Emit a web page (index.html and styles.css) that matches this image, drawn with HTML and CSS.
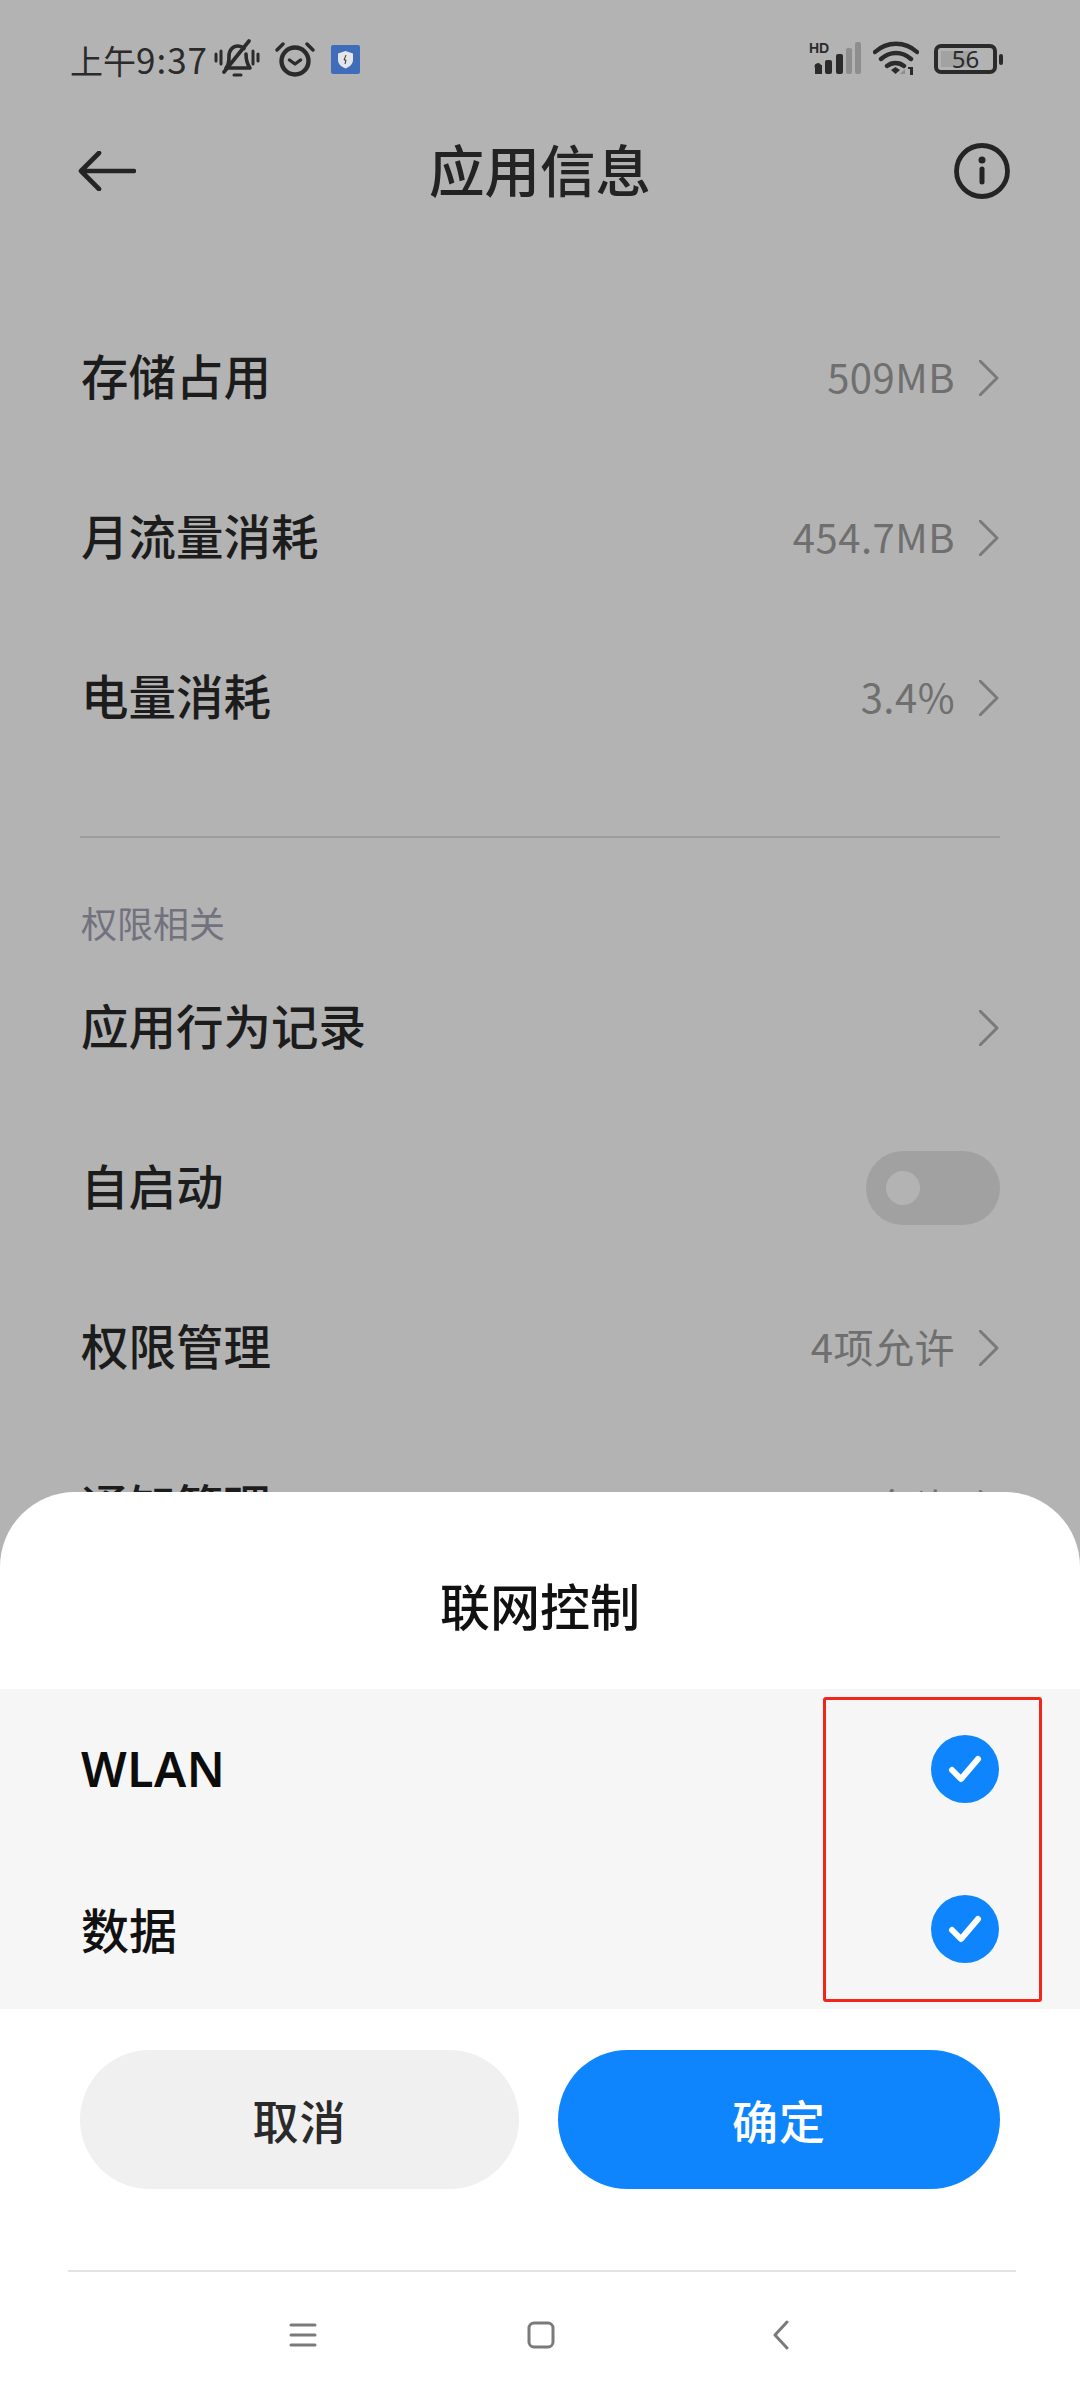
FILE: index.html
```html
<!DOCTYPE html>
<html lang="zh-CN">
<head>
<meta charset="utf-8">
<title>应用信息</title>
<link rel="stylesheet" href="styles.css">
</head>
<body>
<main class="page">
  <div class="status">
    <div class="status-left">
      <span class="clock">上午<span class="clock-time">9:37</span></span>
      <svg class="i-bell" viewBox="0 0 46 40" fill="none" stroke="#2b2b2b" stroke-linecap="round" stroke-linejoin="round">
        <path stroke-width="3" d="M2 15v7M7 12v13M39 12v13M44 15v7"/>
        <path stroke-width="3.600" d="M12 29c3-3 3-7 3-12 0-6 4-10 9-10 2.500 0 4.500 1 6 2.500M32 15c0 6 1 10 4 14H12"/>
        <path stroke-width="3.600" d="M10 33 35 2"/>
        <path stroke-width="3" d="M20 36h7"/>
      </svg>
      <svg class="i-alarm" viewBox="0 0 40 36" fill="none" stroke="#2b2b2b" stroke-linecap="round" stroke-linejoin="round">
        <circle cx="20" cy="20" r="13.500" stroke-width="4.400"/>
        <path stroke-width="3.400" d="M14.500 19l5.500 4 5.500-4M2 9l6-6M38 9l-6-6"/>
      </svg>
      <svg class="i-shield" viewBox="0 0 29 29">
        <rect width="29" height="29" rx="2" fill="#3f6dbb"/>
        <path d="M14.500 6l7.500 2.500v6.500c0 4-3.500 7-7.500 8.500C10.500 22 7 19 7 15V8.500z" fill="#e4e6ea"/>
        <path d="M15 10l-2 5h2l-1 4" fill="none" stroke="#333" stroke-width="1"/>
      </svg>
    </div>
    <div class="status-right">
      <span class="signal">
        <span class="hd">HD</span>
        <svg class="i-bars" viewBox="0 0 50 32">
          <path d="M4 26a3 3 0 0 1 6-3h1v9H4z" fill="#2b2b2b"/>
          <rect x="14" y="18" width="7" height="14" rx="2" fill="#2b2b2b"/>
          <rect x="25" y="12" width="7" height="20" rx="2" fill="#2b2b2b"/>
          <rect x="35" y="6" width="6" height="26" rx="2" fill="#8e8e8e"/>
          <rect x="44" y="0" width="6" height="32" rx="2" fill="#8e8e8e"/>
        </svg>
      </span>
      <svg class="i-wifi" viewBox="0 0 46 36" fill="none" stroke="#2b2b2b" stroke-linecap="round">
        <path stroke-width="4.400" d="M2 11c12-11 30-11 42 0M8 18c9-8 21-8 30 0M14 25c5-4 12-4 17 0"/>
        <path d="M18 29l4.500-3 4.500 3-4.500 4z" fill="#2b2b2b" stroke="none"/>
        <path d="M32 33v-5l-5 5z" fill="#8e8e8e" stroke="none"/>
        <path d="M40 34v-8l-5 0v2h2v6z" fill="#2b2b2b" stroke="none"/>
      </svg>
      <span class="battery">
        <span class="battery-box"><span class="battery-fill"></span><span class="battery-num">56</span></span>
        <span class="battery-nub"></span>
      </span>
    </div>
  </div>

  <header class="nav">
    <svg class="i-back" viewBox="0 0 58 40" fill="none" stroke="#242424" stroke-width="4.600" stroke-linecap="round" stroke-linejoin="round"><path d="M21 2 3 20l18 18M3 20h53"/></svg>
    <h1 class="title">应用信息</h1>
    <svg class="i-info" viewBox="0 0 56 56" fill="none" stroke="#242424" stroke-linecap="round"><circle cx="28" cy="28" r="25.500" stroke-width="4.800"/><circle cx="28" cy="17" r="3.500" fill="#242424" stroke="none"/><path stroke-width="5" d="M28 26v13"/></svg>
  </header>

  <section class="group">
    <div class="row"><span class="label">存储占用</span><span class="value">509MB</span><svg class="chev" viewBox="0 0 20 36"><path d="M1 1l17 17L1 35"/></svg></div>
    <div class="row"><span class="label">月流量消耗</span><span class="value">454.7MB</span><svg class="chev" viewBox="0 0 20 36"><path d="M1 1l17 17L1 35"/></svg></div>
    <div class="row"><span class="label">电量消耗</span><span class="value">3.4%</span><svg class="chev" viewBox="0 0 20 36"><path d="M1 1l17 17L1 35"/></svg></div>
  </section>

  <div class="rule"></div>
  <h2 class="section-title">权限相关</h2>

  <section class="group">
    <div class="row"><span class="label">应用行为记录</span><svg class="chev" viewBox="0 0 20 36"><path d="M1 1l17 17L1 35"/></svg></div>
    <div class="row"><span class="label">自启动</span><span class="toggle"><span class="knob"></span></span></div>
    <div class="row"><span class="label">权限管理</span><span class="value">4项允许</span><svg class="chev" viewBox="0 0 20 36"><path d="M1 1l17 17L1 35"/></svg></div>
    <div class="row"><span class="label">通知管理</span><span class="value">已允许</span><svg class="chev" viewBox="0 0 20 36"><path d="M1 1l17 17L1 35"/></svg></div>
  </section>
</main>

<aside class="sheet">
  <h2 class="sheet-title">联网控制</h2>
  <div class="options">
    <div class="option"><span class="option-label latin">WLAN</span><svg class="check" viewBox="0 0 68 68"><circle cx="34" cy="34" r="34" fill="#0f85fd"/><path d="M21 35l9 9 17-20" fill="none" stroke="#fff" stroke-width="6" stroke-linecap="round" stroke-linejoin="round"/></svg></div>
    <div class="option"><span class="option-label">数据</span><svg class="check" viewBox="0 0 68 68"><circle cx="34" cy="34" r="34" fill="#0f85fd"/><path d="M21 35l9 9 17-20" fill="none" stroke="#fff" stroke-width="6" stroke-linecap="round" stroke-linejoin="round"/></svg></div>
  </div>
  <div class="actions">
    <button class="btn btn-cancel">取消</button>
    <button class="btn btn-ok">确定</button>
  </div>
  <div class="softnav">
    <svg class="nav-menu" viewBox="0 0 28 24" stroke="#7a7a7a" stroke-width="3" stroke-linecap="round"><path d="M2 2h24M2 12h24M2 22h24"/></svg>
    <svg class="nav-home" viewBox="0 0 28 28" fill="none" stroke="#7a7a7a" stroke-width="3"><rect x="2" y="2" width="24" height="24" rx="5"/></svg>
    <svg class="nav-back" viewBox="0 0 18 30" fill="none" stroke="#7a7a7a" stroke-width="3" stroke-linecap="round" stroke-linejoin="round"><path d="M15 2 3 15l12 13"/></svg>
  </div>
  <div class="highlight"></div>
</aside>
</body>
</html>
```
FILE: styles.css
```css
* { box-sizing: border-box; }
html, body { margin: 0; padding: 0; }
body {
  width: 1080px;
  height: 2400px;
  overflow: hidden;
  background: #b3b3b3;
  font-family: "Noto Sans CJK SC", "Noto Sans", sans-serif;
  color: #232323;
}
h1, h2 { margin: 0; font-weight: 400; }
svg { display: block; flex: none; }

.page { height: 1492px; overflow: hidden; }

.status {
  height: 118px;
  padding: 40px 77px 0 70px;
  display: flex;
  justify-content: space-between;
  align-items: flex-start;
}
.status-left, .status-right { display: flex; align-items: center; height: 38px; }
.clock { font-size: 33px; line-height: 38px; color: #2b2b2b; width: 144px; white-space: nowrap; }
.clock-time { font-size: 35px; letter-spacing: 1px; }
.i-bell { width: 46px; height: 40px; }
.i-alarm { width: 40px; height: 36px; margin-left: 15px; }
.i-shield { width: 29px; height: 29px; margin-left: 16px; }

.signal { position: relative; width: 52px; height: 34px; }
.hd { position: absolute; left: 0; top: -2px; font: 700 14px/16px "Liberation Sans", sans-serif; color: #2b2b2b; }
.i-bars { position: absolute; left: 2px; top: 0; width: 50px; height: 32px; }
.i-wifi { width: 46px; height: 36px; margin-left: 12px; }
.battery { display: flex; align-items: center; margin-left: 15px; }
.battery-box {
  position: relative;
  width: 63px;
  height: 30px;
  border: 4px solid #2b2b2b;
  border-radius: 7px;
  display: flex;
  align-items: center;
  justify-content: center;
}
.battery-fill { position: absolute; left: 3px; top: 3px; bottom: 3px; width: 29px; background: #a2a2a2; }
.battery-num { position: relative; font: 400 24px/22px "Noto Sans", sans-serif; color: #2b2b2b; }
.battery-nub { width: 4px; height: 11px; margin-left: 2px; border-radius: 2px; background: #2b2b2b; }

.nav {
  height: 106px;
  padding: 0 70px 0 78px;
  display: flex;
  align-items: center;
  justify-content: space-between;
}
.i-back { width: 58px; height: 40px; }
.i-info { width: 56px; height: 56px; }
.title { font-size: 55.500px; line-height: 106px; font-weight: 500; color: #232323; margin: 0 10px 6px 0; }

.group { display: flex; flex-direction: column; margin-top: 74px; }
.rule + .section-title + .group { margin-top: 0; }
.row {
  height: 160px;
  padding: 0 81px;
  display: flex;
  align-items: center;
}
.label { flex: 1; font-size: 47.500px; line-height: 60px; font-weight: 500; color: #1c1c1c; margin-bottom: 6px; }
.value { font-size: 40px; line-height: 50px; letter-spacing: 0.5px; color: #6f6f6f; margin: 0 24px 5px 0; }
.chev { width: 20px; height: 36px; fill: none; stroke: #7a7a7a; stroke-width: 3; stroke-linecap: round; stroke-linejoin: round; }

.toggle {
  width: 134px;
  height: 74px;
  margin-right: -1px;
  border-radius: 37px;
  background: #a1a1a1;
  display: flex;
  align-items: center;
  padding-left: 20px;
}
.knob { width: 34px; height: 34px; border-radius: 50%; background: #b3b3b3; }

.rule { height: 2px; margin: 58px 80px 0; background: #9d9d9d; }
.section-title {
  height: 110px;
  padding: 58px 81px 0;
  font-size: 36px;
  line-height: 52px;
  color: #72727f;
}

.sheet {
  position: relative;
  height: 908px;
  background: #fff;
  border-radius: 75px 75px 0 0;
}
.sheet-title {
  height: 197px;
  padding-top: 77px;
  text-align: center;
  font-size: 50px;
  line-height: 70px;
  font-weight: 500;
  color: #111;
}
.options { background: #f6f6f6; }
.option {
  height: 160px;
  padding: 0 81px;
  display: flex;
  align-items: center;
  justify-content: space-between;
}
.option-label { font-size: 48px; line-height: 60px; font-weight: 500; color: #111; margin-bottom: 2px; }
.latin { font-family: "Noto Sans", sans-serif; font-size: 48px; font-weight: 600; letter-spacing: 0.5px; color: #0c0c0c; margin-bottom: 0; }
.check { width: 68px; height: 68px; }

.actions {
  display: flex;
  gap: 39px;
  padding: 41px 80px 0;
}
.btn {
  height: 139px;
  border: 0;
  border-radius: 70px;
  font-family: inherit;
  font-size: 46px;
  line-height: 60px;
  padding: 0 0 2px;
  font-weight: 500;
  letter-spacing: 1px;
}
.btn-cancel { flex: 0 0 439px; background: #f0f0f0; color: #2a2a2a; }
.btn-ok { flex: 1; background: #0f85fd; color: #fff; }

.softnav {
  margin: 81px 64px 0 68px;
  height: 127px;
  border-top: 2px solid #e4e4e4;
  display: grid;
  grid-template-columns: 238px 245px 1fr;
  align-items: center;
  padding-left: 221px;
}
.nav-menu { width: 28px; height: 24px; }
.nav-home { width: 28px; height: 28px; }
.nav-back { width: 18px; height: 30px; }

.highlight {
  position: absolute;
  left: 823px;
  top: 205px;
  width: 219px;
  height: 305px;
  border: 3px solid #f0261b;
  border-radius: 3px;
}
```
